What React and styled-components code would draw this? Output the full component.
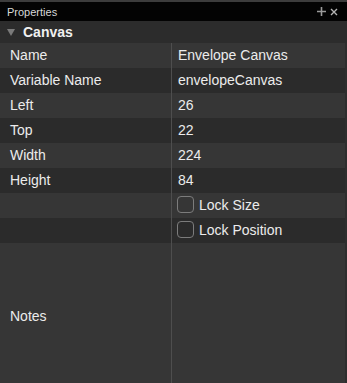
import styled, { createGlobalStyle } from "styled-components";

const Global = createGlobalStyle`
  html, body { margin: 0; padding: 0; background: #363636; }
  body { font-family: "Liberation Sans", Arial, sans-serif; }
`;

const rows = [
  { label: "Name", value: "Envelope Canvas" },
  { label: "Variable Name", value: "envelopeCanvas" },
  { label: "Left", value: "26" },
  { label: "Top", value: "22" },
  { label: "Width", value: "224" },
  { label: "Height", value: "84" },
  { label: "", check: "Lock Size" },
  { label: "", check: "Lock Position" },
];

export default function App() {
  return (
    <>
      <Global />
      <Panel>
        <TitleBar>
          <span className="title">Properties</span>
          <span className="actions">
            <svg width="9" height="9" viewBox="0 0 9 9">
              <path d="M4.5 0v9M0 4.5h9" stroke="#9a9a9a" strokeWidth="1.6" />
            </svg>
            <svg width="8" height="8" viewBox="0 0 8 8">
              <path d="M1 1l6 6M7 1l-6 6" stroke="#b4b4b4" strokeWidth="1.4" />
            </svg>
          </span>
        </TitleBar>
        <Section>
          <svg width="8" height="8" viewBox="0 0 8 8">
            <path d="M0 1h8L4 8z" fill="#7a7a7a" />
          </svg>
          <span>Canvas</span>
        </Section>
        <Table>
          {rows.map((r, i) => (
            <Row key={i} $alt={i % 2 === 1}>
              <Label>{r.label}</Label>
              <Value>
                {r.check ? (
                  <>
                    <Box />
                    {r.check}
                  </>
                ) : (
                  r.value
                )}
              </Value>
            </Row>
          ))}
          <Row $tall>
            <Label>Notes</Label>
            <Value />
          </Row>
        </Table>
      </Panel>
    </>
  );
}

const Panel = styled.div`
  width: 347px;
  height: 383px;
  overflow: hidden;
  display: flex;
  flex-direction: column;
  background: #363636;
  border-top: 2px solid #3c3c3c;
  box-sizing: border-box;
`;

const TitleBar = styled.div`
  height: 19px;
  flex: none;
  background: #030303;
  color: #d8d8d8;
  font-size: 11px;
  display: flex;
  align-items: center;
  justify-content: space-between;
  padding: 0 9px 0 7px;
  .actions {
    display: flex;
    align-items: center;
    gap: 4px;
  }
`;

const Section = styled.div`
  height: 22px;
  flex: none;
  background: #2c2c2c;
  display: flex;
  align-items: center;
  gap: 8px;
  padding-left: 7px;
  color: #f0f0f0;
  font-weight: bold;
  font-size: 14px;
`;

const Table = styled.div`
  flex: none;
  display: flex;
  flex-direction: column;
  border-right: 2px solid #2e2e2e;
`;

const Row = styled.div`
  display: grid;
  grid-template-columns: 172px 1fr;
  height: ${(p) => (p.$tall ? "148px" : "25px")};
  flex: none;
  background: ${(p) => (p.$alt ? "#2b2b2b" : "#363636")};
  color: #ececec;
  font-size: 14px;
  line-height: 16px;
`;

const Label = styled.div`
  display: flex;
  align-items: center;
  padding: 0 0 2px 10px;
  border-right: 1px solid #4e4e4e;
`;

const Value = styled.div`
  display: flex;
  align-items: center;
  padding: 0 0 2px 6px;
  gap: 5px;
`;

const Box = styled.span`
  width: 17px;
  height: 17px;
  border: 1px solid #7c7c7c;
  border-radius: 4px;
  box-sizing: border-box;
  margin-left: -1px;
`;
